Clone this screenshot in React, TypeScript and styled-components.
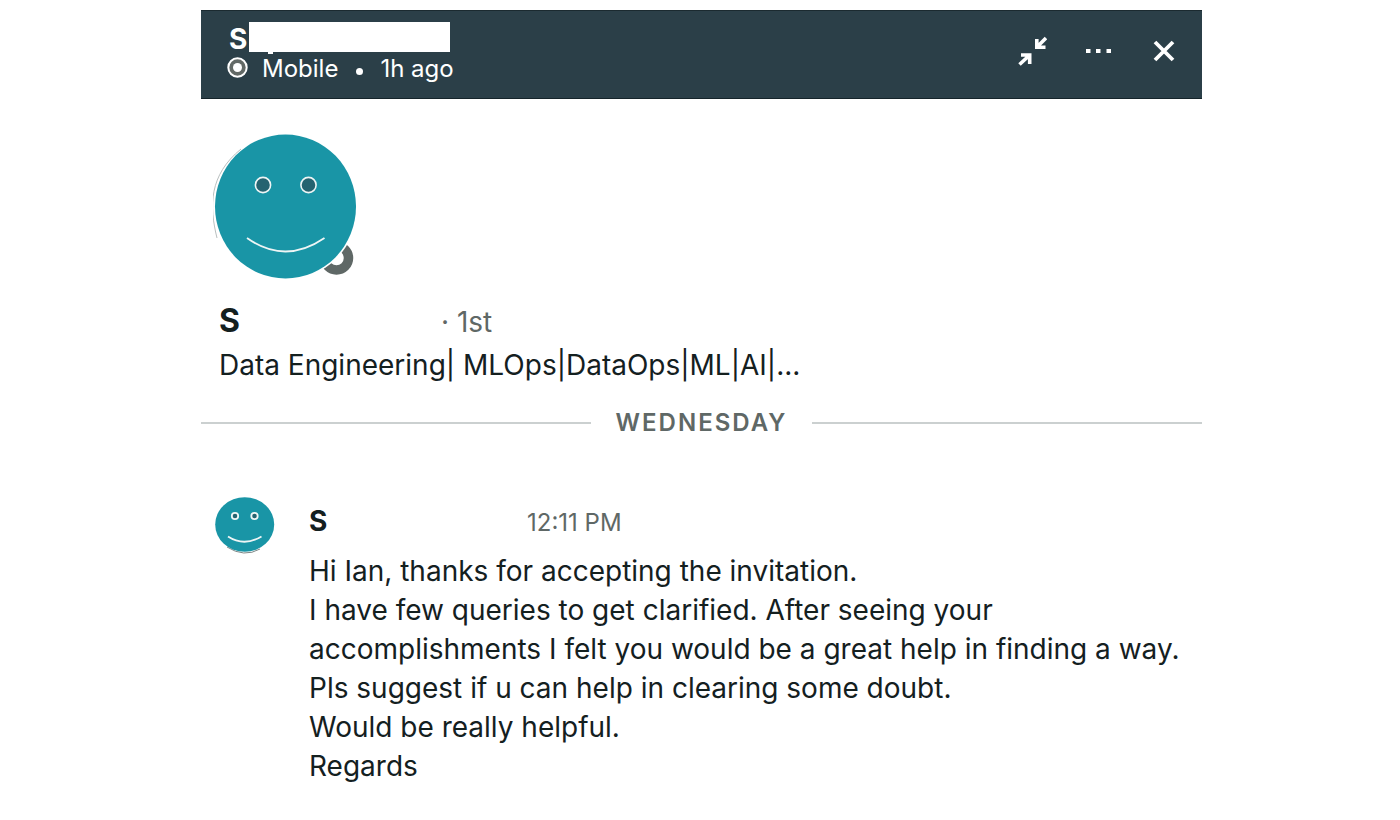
import React from "react";
import styled, { createGlobalStyle } from "styled-components";

const GlobalStyle = createGlobalStyle`
  *, *::before, *::after { box-sizing: border-box; }
  body {
    margin: 0;
    background: #fff;
    color: #14201f;
    font-family: Inter, "Liberation Sans", sans-serif;
  }
  h1, h2, p { margin: 0; }
`;

const Conversation = styled.main`
  padding: 10px 198px 32px 201px;
`;

const Header = styled.header`
  display: flex;
  justify-content: space-between;
  align-items: flex-start;
  padding: 11px 23px 16px 26px;
  background: #2b3f48;
  border-top: 1px solid #1b2a30;
  border-bottom: 1px solid #15242a;
  color: #fff;
`;

const Contact = styled.div`
  display: flex;
  flex-direction: column;
`;

const ContactName = styled.h1`
  display: flex;
  gap: 2px;
  padding-left: 2px;
  font-size: 28px;
  line-height: 34px;
  font-weight: 700;
`;

const NameCover = styled.span`
  width: 201px;
  height: 30px;
  background: #fff;

  &::after {
    content: "";
    display: block;
    width: 5px;
    height: 32px;
    margin-left: 19px;
    background: #fff;
  }
`;

const Presence = styled.div`
  display: flex;
  align-items: center;
  font-size: 24px;
  line-height: 26px;
`;

const PresenceLabel = styled.span`
  margin-left: 14px;
`;

const Dot = styled.span`
  width: 7px;
  height: 7px;
  margin: 4px 17px 0 18px;
  border-radius: 50%;
  background: #fff;
`;

const Actions = styled.div`
  display: flex;
  align-items: center;
  gap: 36px;
  padding-top: 14px;
`;

const IconButton = styled.button`
  display: flex;
  padding: 0;
  border: 0;
  background: none;
  color: inherit;
  cursor: pointer;
`;

const Profile = styled.section`
  padding: 34px 18px 0 12px;
`;

const AvatarIcon = styled.svg`
  display: block;
  flex: none;
`;

const ProfileText = styled.div`
  padding: 20px 0 0 6px;
`;

const ProfileLine = styled.div<{ $cover: number }>`
  display: grid;
  grid-template-columns: ${(p) => p.$cover}px 1fr;
  align-items: baseline;
`;

const ProfileName = styled.h2`
  font-size: 32px;
  line-height: 44px;
  font-weight: 700;
`;

const Degree = styled.span`
  color: #5f6866;
  font-size: 28px;
`;

const Headline = styled.p`
  font-size: 28px;
  line-height: 44px;
`;

const DayDivider = styled.div`
  display: flex;
  align-items: center;
  gap: 25px;
  margin-top: 18px;
  color: #5f6866;
  font-size: 24px;
  line-height: 36px;
  font-weight: 600;
  letter-spacing: 2px;

  &::before, &::after {
    content: "";
    flex: 1;
    height: 2px;
    background: #cbd0d0;
  }
`;

const Message = styled.article`
  display: flex;
  align-items: flex-start;
  gap: 33px;
  padding: 55px 18px 0 14px;
`;

const MessageBody = styled.div`
  flex: 1;
  padding-top: 5px;
`;

const Sender = styled.h2`
  font-size: 28px;
  line-height: 40px;
  font-weight: 700;
`;

const Time = styled.time`
  color: #5f6866;
  font-size: 24px;
`;

const MessageText = styled.p`
  padding-top: 11px;
  font-size: 28px;
  line-height: 39px;
`;

const lines = [
  "Hi Ian, thanks for accepting the invitation.",
  "I have few queries to get clarified. After seeing your accomplishments I felt you would be a great help in finding a way.",
  "Pls suggest if u can help in clearing some doubt.",
  "Would be really helpful.",
  "Regards",
];

function LargeAvatar() {
  return (
    <AvatarIcon width="144" height="146" viewBox="0 0 144 146" role="img" aria-label="Profile photo">
      <circle cx="123.5" cy="125" r="12" fill="none" stroke="#5f6866" strokeWidth="9.5" />
      <ellipse cx="72.5" cy="73.5" rx="72.3" ry="73.5" fill="#fff" />
      <path d="M28 16C-4 42 -4 73 4 105" fill="none" stroke="#b9bfbf" strokeWidth="1" />
      <ellipse cx="72.5" cy="73.5" rx="70.5" ry="72" fill="#1995a6" />
      <g fill="#256370" stroke="#eef5f5" strokeWidth="1.6">
        <circle cx="50" cy="52" r="7.6" />
        <circle cx="95.5" cy="52" r="7.6" />
      </g>
      <path d="M34 105Q72 132 111.5 105" fill="none" stroke="#eef5f5" strokeWidth="1.8" />
    </AvatarIcon>
  );
}

function SmallAvatar() {
  return (
    <AvatarIcon width="61" height="58" viewBox="0 0 61 58" role="img" aria-label="Profile photo">
      <path d="M12 51Q29 62 45 53" fill="none" stroke="#7d8786" strokeWidth="1" />
      <ellipse cx="29.7" cy="28.5" rx="29.5" ry="27.2" fill="#1995a6" />
      <g fill="#256370" stroke="#eef5f5" strokeWidth="1.8">
        <circle cx="20" cy="20" r="3.2" />
        <circle cx="39.5" cy="20" r="3.2" />
      </g>
      <path d="M13 40.5Q29 51 46.5 40.5" fill="none" stroke="#eef5f5" strokeWidth="1.8" />
    </AvatarIcon>
  );
}

export default function App() {
  return (
    <>
      <GlobalStyle />
      <Conversation>
        <Header>
          <Contact>
            <ContactName>S<NameCover /></ContactName>
            <Presence>
              <svg width="21" height="26" viewBox="0 0 21 26" aria-hidden="true">
                <circle cx="10.5" cy="11.5" r="9.2" fill="#626966" stroke="#fff" strokeWidth="2" />
                <circle cx="10.5" cy="11.5" r="4.5" fill="#fff" />
              </svg>
              <PresenceLabel>Mobile</PresenceLabel>
              <Dot />
              <span>1h ago</span>
            </Presence>
          </Contact>
          <Actions>
            <IconButton type="button" aria-label="Minimize">
              <svg width="30" height="30" viewBox="0 0 30 30" fill="none" stroke="currentColor" strokeWidth="3.6">
                <path d="M19.8 3v8.200H28.500M20 11L29 2" />
                <path d="M4 19H12.700V28M12.500 19.200L2.500 28.500" />
              </svg>
            </IconButton>
            <IconButton type="button" aria-label="More options">
              <svg width="30" height="30" viewBox="0 0 30 30" fill="currentColor">
                <path d="M3 13h4.500v4H3zM13 13h4.500v4h-4.500zM23.500 13h4.500v4h-4.500z" />
              </svg>
            </IconButton>
            <IconButton type="button" aria-label="Close">
              <svg width="30" height="30" viewBox="0 0 30 30">
                <path d="M6 6l18 18M24 6L6 24" stroke="currentColor" strokeWidth="3.8" />
              </svg>
            </IconButton>
          </Actions>
        </Header>

        <Profile>
          <LargeAvatar />
          <ProfileText>
            <ProfileLine $cover={222}>
              <ProfileName>S</ProfileName>
              <Degree>· 1st</Degree>
            </ProfileLine>
            <Headline>Data Engineering| MLOps|DataOps|ML|AI|...</Headline>
          </ProfileText>
        </Profile>

        <DayDivider>WEDNESDAY</DayDivider>

        <Message>
          <SmallAvatar />
          <MessageBody>
            <ProfileLine $cover={218}>
              <Sender>S</Sender>
              <Time>12:11 PM</Time>
            </ProfileLine>
            <MessageText>
              {lines.map((line, i) => (
                <React.Fragment key={i}>
                  {i > 0 && <br />}
                  {line}
                </React.Fragment>
              ))}
            </MessageText>
          </MessageBody>
        </Message>
      </Conversation>
    </>
  );
}
